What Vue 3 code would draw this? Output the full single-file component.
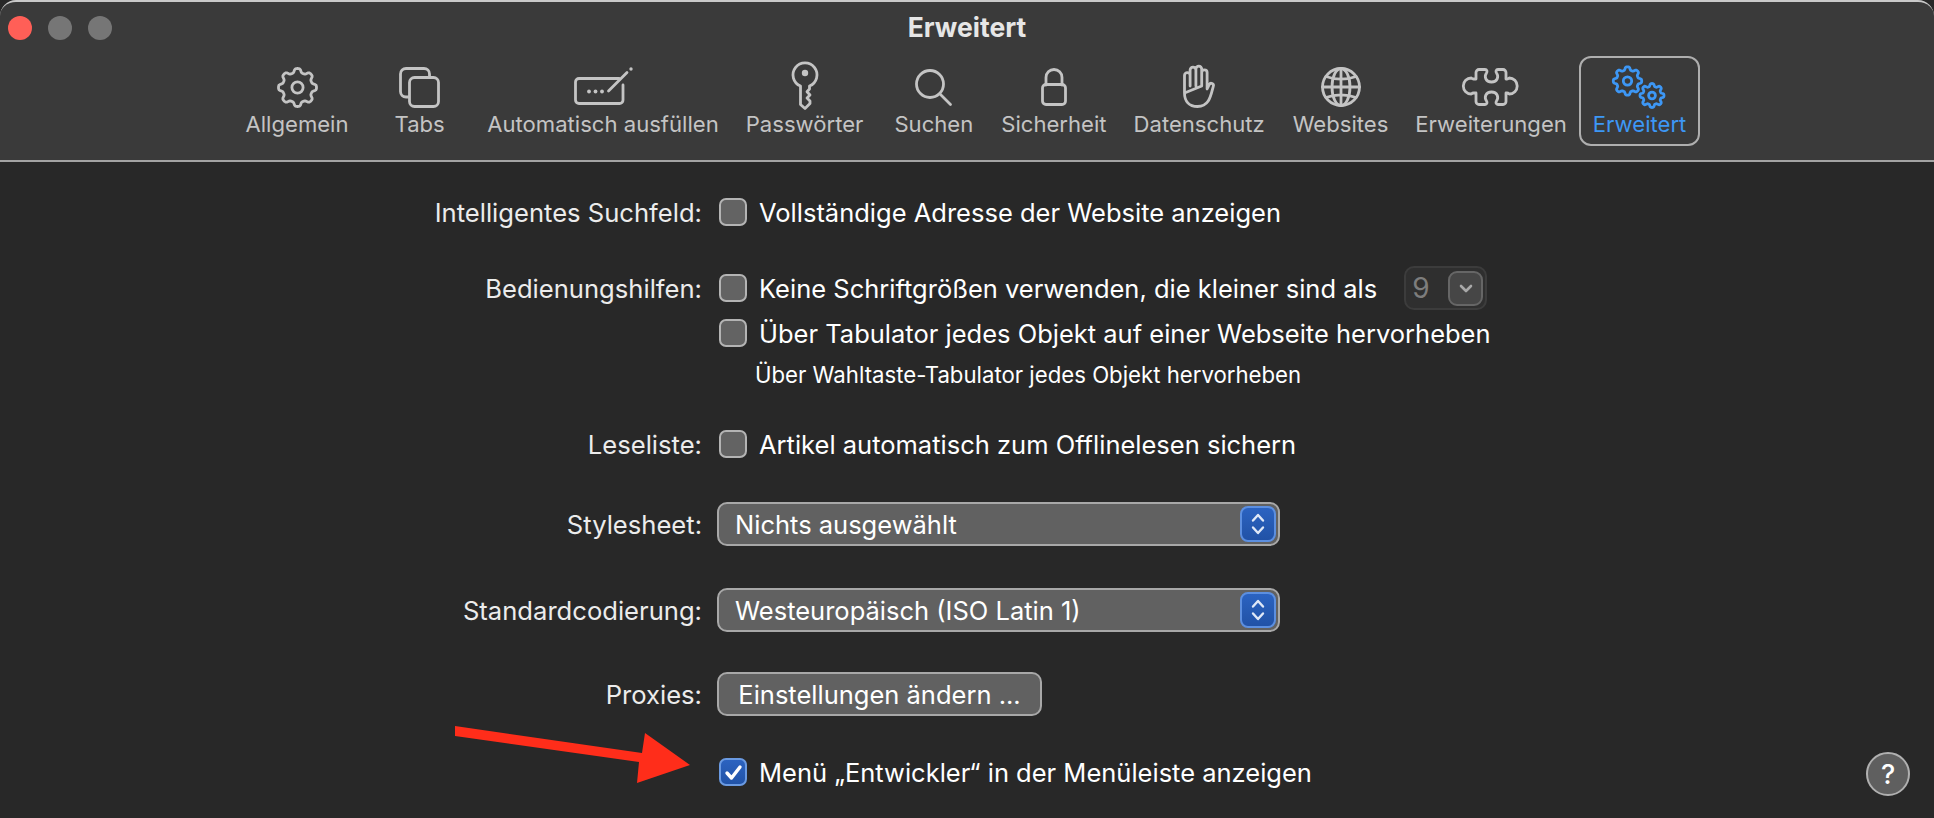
<script setup>
// wavy outline for the cog icons, tooth on top
const gear = (cx, cy, outer, inner, hole, teeth = 8) => {
  const steps = teeth * 14
  const mid = (outer + inner) / 2
  const amp = (outer - inner) / 2
  const pts = []
  for (let i = 0; i < steps; i++) {
    const a = (i / steps) * Math.PI * 2
    const r = mid + amp * Math.tanh(1.9 * Math.cos(teeth * a)) / Math.tanh(1.9)
    pts.push(`${(cx + r * Math.sin(a)).toFixed(2)} ${(cy - r * Math.cos(a)).toFixed(2)}`)
  }
  const ring = `M${cx - hole} ${cy}a${hole} ${hole} 0 1 0 ${hole * 2} 0a${hole} ${hole} 0 1 0 ${-hole * 2} 0Z`
  return `M${pts.join('L')}Z${ring}`
}

const tabs = [
  { label: 'Allgemein', w: 41, h: 41, y: 0, paths: [gear(20.5, 20.5, 19, 15, 5.6)] },
  {
    label: 'Tabs', w: 41, h: 41, y: 0, wide: true,
    paths: [
      'M9.5 30H7a5.5 5.5 0 0 1-5.5-5.5V7A5.5 5.5 0 0 1 7 1.5h18A5.5 5.5 0 0 1 30.5 7v2.5',
      'M15.5 10.5h19a5 5 0 0 1 5 5v19a5 5 0 0 1-5 5h-19a5 5 0 0 1-5-5v-19a5 5 0 0 1 5-5Z'
    ]
  },
  {
    label: 'Automatisch ausfüllen', w: 59, h: 39, y: -1,
    paths: [
      'M45 11.5H5a3.5 3.5 0 0 0-3.5 3.5v18A3.5 3.5 0 0 0 5 36.5h40.5A3.5 3.5 0 0 0 49 33V18',
      'M34.5 24L53 5.5'
    ],
    dots: [[15, 24.5, 1.9], [21.5, 24.5, 1.9], [28, 24.5, 1.9], [57, 2, 1.7]]
  },
  {
    label: 'Passwörter', w: 26, h: 48, y: -1,
    paths: ['M8.5 24A12 12 0 1 1 17.5 24V27L15 29.8L18 33L15 36L18 39V41.5L13 46.5L8.5 42.5Z'],
    dots: [[13, 11, 3.2]]
  },
  {
    label: 'Suchen', w: 38, h: 38, y: 1, push: 4,
    paths: ['M28.5 15a13.5 13.5 0 1 1-27 0a13.5 13.5 0 1 1 27 0Z', 'M25 25L35.5 35.5']
  },
  {
    label: 'Sicherheit', w: 26, h: 38, y: 0, push: 1,
    paths: [
      'M5 17V9.5a8 8 0 0 1 16 0V17',
      'M5 16.5h16a3.5 3.5 0 0 1 3.5 3.5v13a3.5 3.5 0 0 1-3.5 3.5H5A3.5 3.5 0 0 1 1.5 33V20A3.5 3.5 0 0 1 5 16.5Z'
    ]
  },
  {
    label: 'Datenschutz', w: 32, h: 43, y: -1,
    paths: [
      'M1.5 28V10.5a2.8 2.8 0 0 1 5.6 0V21M7.1 21V5a2.9 2.9 0 0 1 5.8 0V21M12.9 21V4a2.9 2.9 0 0 1 5.8 0V21M18.7 21V7.5a2.7 2.7 0 0 1 5.4 0V24l2.2-4.5a2.2 2.2 0 0 1 4 1.8C28 29 27 41.5 14.5 41.5C6 41.5 1.5 36 1.5 28Z'
    ]
  },
  {
    label: 'Websites', w: 40, h: 40, y: 0, push: 1,
    paths: [
      'M38.5 20a18.5 18.5 0 1 1-37 0a18.5 18.5 0 1 1 37 0Z',
      'M29 20a9 18.5 0 1 1-18 0a9 18.5 0 1 1 18 0Z',
      'M20 1.5V38.5M1.5 20H38.5M5 9.5C14 13 26 13 35 9.5M5 30.5C14 27 26 27 35 30.5'
    ]
  },
  {
    label: 'Erweiterungen', w: 58, h: 38, y: 0,
    paths: [
      'M14 11V4.5a3 3 0 0 1 3-3H23c2 0 2.5 2 1.5 3.5c-2.5 3.5-1 9 5 9c6 0 7.5-5.5 5-9c-1-1.5-.5-3.5 1.5-3.5H41a3 3 0 0 1 3 3V11H45c1 0 1.5-.4 2.2-1a8 8 0 1 1 0 16c-.7-.6-1.2-1-2.2-1H44V33.5a3 3 0 0 1-3 3H36c-2 0-2.5-2-1.5-3.5c2.5-3.5 1-9-5-9c-6 0-7.5 5.5-5 9c1 1.5.5 3.5-1.5 3.5H17a3 3 0 0 1-3-3V25H11.5c-1 0-1.5.4-2.2 1a8 8 0 1 1 0-16c.7.6 1.2 1 2.2 1Z'
    ]
  },
  {
    label: 'Erweitert', w: 55, h: 43, y: 0, active: true, push: -1,
    paths: [gear(15.5, 15, 14.2, 11, 4.2), gear(40, 29.5, 12, 9.2, 3.4)]
  }
]
</script>

<template>
  <div class="window">
    <header class="toolbar">
      <div class="titlebar">
        <div class="lights">
          <span class="light red"></span>
          <span class="light"></span>
          <span class="light"></span>
        </div>
        <div class="title">Erweitert</div>
      </div>
      <nav class="tabs">
        <div
          v-for="tab in tabs"
          :key="tab.label"
          class="tab"
          :class="{ active: tab.active, wide: tab.wide }"
          :style="{ marginLeft: `${tab.push || 0}px` }"
        >
          <div class="icon">
            <svg
              :width="tab.w"
              :height="tab.h"
              :viewBox="`0 0 ${tab.w} ${tab.h}`"
              :style="{ transform: `translateY(${tab.y}px)` }"
            >
              <path v-for="d in tab.paths" :key="d" :d="d" class="line" />
              <circle
                v-for="c in tab.dots"
                :key="c[0]"
                :cx="c[0]"
                :cy="c[1]"
                :r="c[2]"
                class="dot"
              />
            </svg>
          </div>
          <span class="tab-label">{{ tab.label }}</span>
        </div>
      </nav>
    </header>

    <main class="prefs">
      <div class="row">
        <label class="name">Intelligentes Suchfeld:</label>
        <span class="check"></span>
        <span class="text">Vollständige Adresse der Website anzeigen</span>
      </div>

      <div class="row section">
        <label class="name">Bedienungshilfen:</label>
        <span class="check"></span>
        <span class="text">Keine Schriftgrößen verwenden, die kleiner sind als</span>
        <div class="stepper">
          <span class="stepper-val">9</span>
          <span class="stepper-btn">
            <svg width="14" height="9" viewBox="0 0 14 9"><path d="M2 2l5 5l5-5" /></svg>
          </span>
        </div>
      </div>
      <div class="row tight">
        <span class="name"></span>
        <span class="check"></span>
        <span class="text">Über Tabulator jedes Objekt auf einer Webseite hervorheben</span>
      </div>
      <div class="row tight small-row">
        <span class="name"></span>
        <span class="small">Über Wahltaste-Tabulator jedes Objekt hervorheben</span>
      </div>

      <div class="row near">
        <label class="name">Leseliste:</label>
        <span class="check"></span>
        <span class="text">Artikel automatisch zum Offlinelesen sichern</span>
      </div>

      <div class="row section field">
        <label class="name">Stylesheet:</label>
        <div class="select">
          <span>Nichts ausgewählt</span>
          <span class="select-btn">
            <svg width="16" height="26" viewBox="0 0 16 26">
              <path d="M3 9.5L8 4l5 5.5M3 16.5L8 22l5-5.5" />
            </svg>
          </span>
        </div>
      </div>

      <div class="row far field">
        <label class="name">Standardcodierung:</label>
        <div class="select">
          <span>Westeuropäisch (ISO Latin 1)</span>
          <span class="select-btn">
            <svg width="16" height="26" viewBox="0 0 16 26">
              <path d="M3 9.5L8 4l5 5.5M3 16.5L8 22l5-5.5" />
            </svg>
          </span>
        </div>
      </div>

      <div class="row section field">
        <label class="name">Proxies:</label>
        <button class="btn">Einstellungen ändern ...</button>
      </div>

      <div class="row near">
        <span class="name"></span>
        <span class="check on">
          <svg width="19" height="17" viewBox="0 0 19 17"><path d="M3 9l4.5 5L16 3" /></svg>
        </span>
        <span class="text">Menü „Entwickler“ in der Menüleiste anzeigen</span>
        <span class="help">?</span>
      </div>
    </main>

    <svg class="arrow" width="240" height="64" viewBox="0 0 240 64">
      <path d="M5 0L5 10L189 36L187 57L240 39L195 7L192 27Z" />
    </svg>
  </div>
</template>

<style scoped>
.window {
  position: relative;
  width: 1934px;
  height: 818px;
  overflow: hidden;
  background: #282828;
  color: #fff;
  font-family: Inter, "Liberation Sans", sans-serif;
}

.toolbar {
  height: 162px;
  box-sizing: border-box;
  border-top: 2px solid #c9c9c9;
  border-bottom: 2px solid #a3a3a3;
  border-radius: 16px 16px 0 0;
  background: #3a3a3a;
}
.titlebar {
  display: grid;
  grid-template-columns: 1fr auto 1fr;
  align-items: center;
  height: 50px;
}
.lights {
  display: flex;
  gap: 16px;
  padding: 2px 0 0 8px;
}
.light {
  width: 24px;
  height: 24px;
  border-radius: 50%;
  background: #767676;
}
.light.red {
  background: #ff5f57;
}
.title {
  font-size: 26.5px;
  font-weight: 700;
  color: #e6e6e6;
}

.tabs {
  display: flex;
  margin-top: 4px;
  padding-left: 232px;
}
.tab {
  display: flex;
  flex-direction: column;
  align-items: center;
  height: 90px;
  box-sizing: border-box;
  padding: 0 11.5px;
  border: 2px solid transparent;
  border-radius: 12px;
  color: #c4c4c4;
}
.tab.wide {
  padding: 0 27px 0 30.5px;
}
.tab.active {
  border-color: #aeaeae;
  color: #3d97f5;
}
.icon {
  display: flex;
  align-items: center;
  justify-content: center;
  height: 58px;
}
.icon svg {
  display: block;
  overflow: visible;
}
.line {
  fill: none;
  stroke: currentColor;
  stroke-width: 2.8;
  stroke-linecap: round;
  stroke-linejoin: round;
}
.dot {
  fill: currentColor;
}
.tab-label {
  margin-top: -5px;
  font-size: 22.1px;
  line-height: 26px;
  white-space: nowrap;
}

.prefs {
  padding-top: 32px;
}
.row {
  display: flex;
  align-items: center;
  height: 36px;
}
.section {
  margin-top: 40px;
}
.near {
  margin-top: 38px;
}
.far {
  margin-top: 42px;
}
.tight {
  margin-top: 9px;
}
.small-row {
  height: 28px;
}
.field {
  height: 44px;
}
.name {
  flex: none;
  width: 702px;
  margin-right: 16px;
  font-size: 25.6px;
  text-align: right;
  color: #ececec;
}
.check {
  flex: none;
  display: flex;
  align-items: center;
  justify-content: center;
  box-sizing: border-box;
  width: 28px;
  height: 28px;
  margin-left: 1px;
  border: 2px solid #b4b4b4;
  border-radius: 7px;
  background: #636363;
}
.check.on {
  border-color: #6a9ae2;
  background: linear-gradient(#2c63c0, #2153a8);
}
.check svg path {
  fill: none;
  stroke: #fff;
  stroke-width: 3.4;
  stroke-linecap: round;
  stroke-linejoin: round;
}
.text {
  margin-left: 12px;
  font-size: 25.5px;
  white-space: nowrap;
}
.small {
  margin-left: 37px;
  font-size: 22.2px;
  white-space: nowrap;
}

.stepper {
  display: flex;
  align-items: center;
  justify-content: space-between;
  box-sizing: border-box;
  width: 83px;
  height: 44px;
  margin-left: 27px;
  padding: 0 2px 0 6px;
  border: 2px solid #3c3c3c;
  border-radius: 10px;
  background: #2f2f2f;
}
.stepper-val {
  font-size: 28px;
  color: #7d7d7d;
}
.stepper-btn {
  display: flex;
  align-items: center;
  justify-content: center;
  box-sizing: border-box;
  width: 35px;
  height: 35px;
  border: 2px solid #666;
  border-radius: 9px;
  background: #464646;
}
.stepper-btn path {
  fill: none;
  stroke: #a8a8a8;
  stroke-width: 2.6;
  stroke-linecap: round;
  stroke-linejoin: round;
}

.select {
  display: flex;
  align-items: center;
  justify-content: space-between;
  box-sizing: border-box;
  width: 563px;
  height: 44px;
  margin-left: -1px;
  padding: 0 2px 0 16px;
  border: 2px solid #a8a8a8;
  border-radius: 10px;
  background: #616161;
  font-size: 25.5px;
}
.select-btn {
  display: flex;
  align-items: center;
  justify-content: center;
  box-sizing: border-box;
  width: 36px;
  height: 36px;
  border: 2px solid #5c8fe0;
  border-radius: 8px;
  background: linear-gradient(#2b63c1, #2152a6);
}
.select-btn path {
  fill: none;
  stroke: #dfe8f7;
  stroke-width: 2.4;
  stroke-linecap: round;
  stroke-linejoin: round;
}
.btn {
  box-sizing: border-box;
  width: 325px;
  height: 44px;
  margin-left: -1px;
  padding: 0;
  border: 2px solid #a8a8a8;
  border-radius: 10px;
  background: #616161;
  color: #fff;
  font-family: inherit;
  font-size: 25.5px;
}

.help {
  display: flex;
  align-items: center;
  justify-content: center;
  box-sizing: border-box;
  width: 44px;
  height: 44px;
  margin: 4px 24px 0 auto;
  border: 2px solid #b0b0b0;
  border-radius: 50%;
  background: #5f5f5f;
  font-size: 27px;
  font-weight: 500;
}

.arrow {
  position: absolute;
  left: 450px;
  top: 726px;
}
.arrow path {
  fill: #ff2d1a;
}
</style>

<style>
html,
body {
  margin: 0;
  background: #282828;
  overflow: hidden;
}
</style>
